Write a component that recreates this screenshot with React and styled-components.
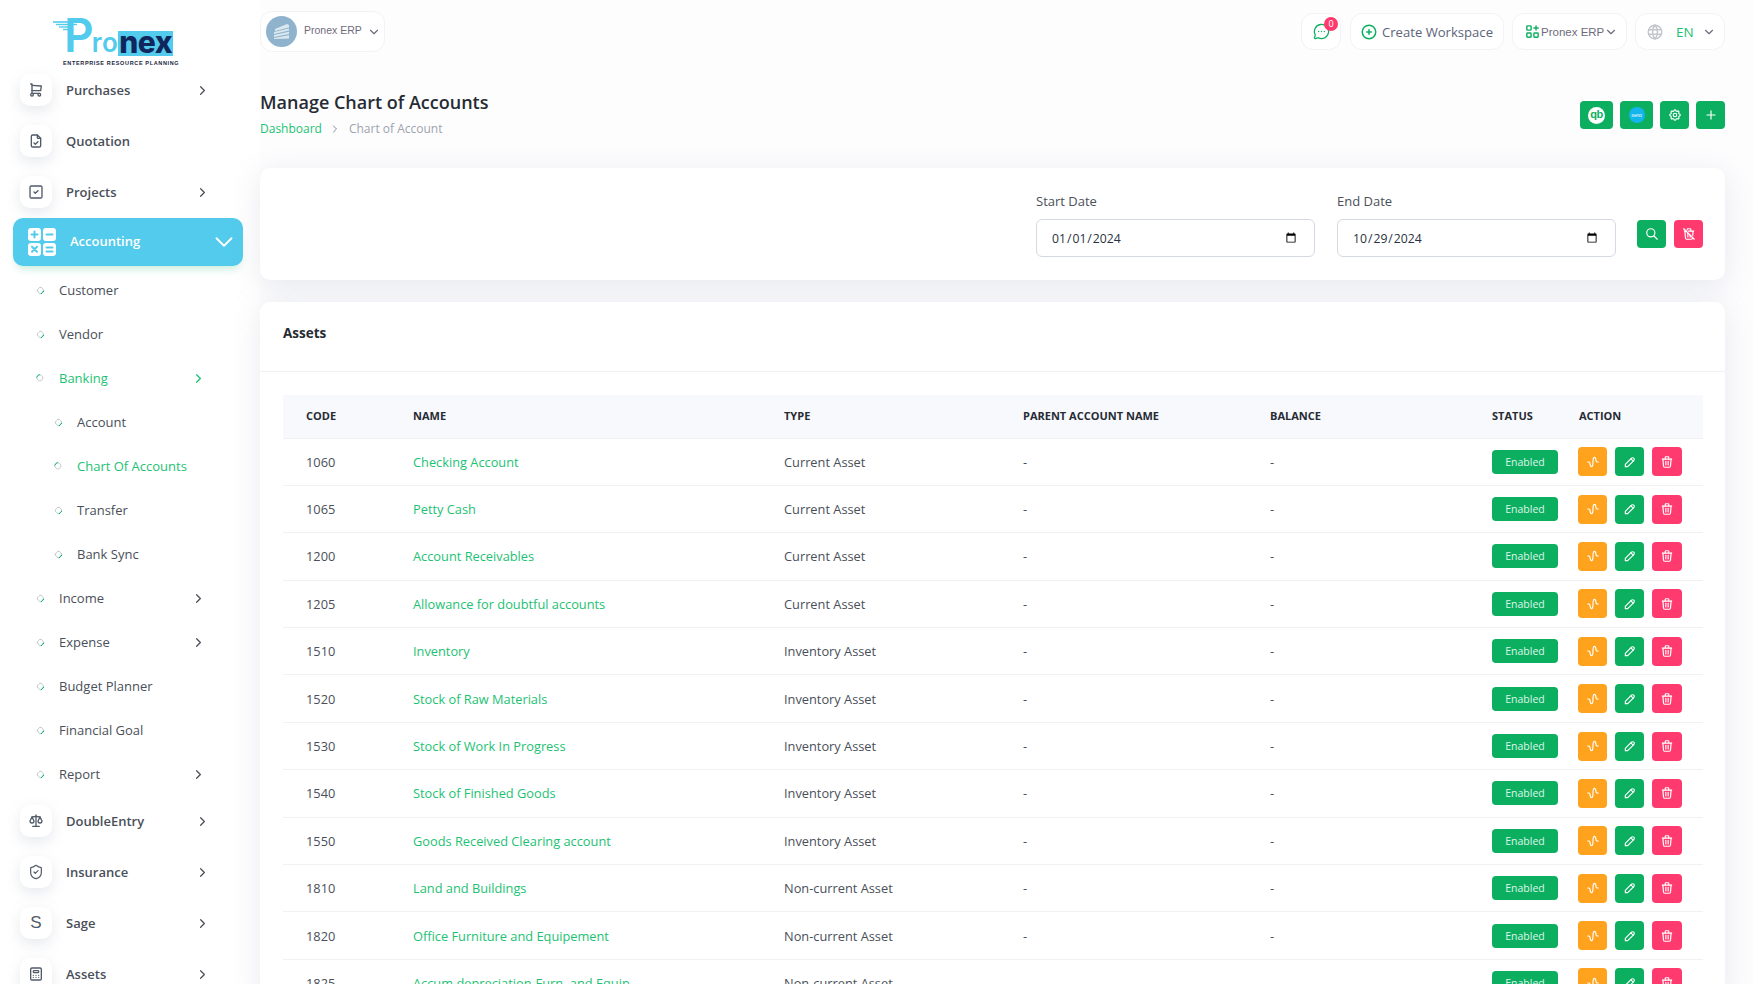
import React from "react";
import styled, { createGlobalStyle } from "styled-components";
import { MessageCircleMore, ShieldCheck } from "lucide-react";
import {
  TbShoppingCart, TbFileCheck, TbSquareCheck, TbScale, TbCalculator,
  TbChevronRight, TbChevronDown, TbPlus, TbSearch, TbTrashOff, TbWaveSine, TbPencil,
  TbTrash, TbApps, TbSettings, TbCirclePlus, TbWorld,
} from "react-icons/tb";

const GREEN = "#0caf60";
const LINK = "#1cc273";
const PINK = "#ff3a6e";
const ORANGE = "#ffa21d";
const CYAN = "#52cbec";
const FONT = `"Open Sans", "Liberation Sans", sans-serif`;

const Global = createGlobalStyle`
  html, body { margin: 0; padding: 0; height: 100%; overflow: hidden; background: #fdfdfe; }
  body { font-family: ${FONT}; font-size: 13px; color: #293240; }
  * { box-sizing: border-box; }
`;

const Shell = styled.div`
  display: flex;
  width: 1753px;
  height: 984px;
  overflow: hidden;
`;

const Sidebar = styled.aside`
  flex: 0 0 260px;
  height: 984px;
  overflow: hidden;
  background: #fff;
`;

const LogoArea = styled.div`
  height: 74px;
  padding: 21px 0 0 53px;
`;

const LogoMark = styled.div`
  position: relative;
  width: 130px;
  height: 46px;
`;

const LogoWord = styled.div`
  display: flex;
  align-items: flex-end;
  height: 35px;
  padding-left: 11px;
  color: ${CYAN};
  font-family: "Inter", sans-serif;
  line-height: 1;
`;

const LogoP = styled.span`
  font-size: 46px;
  font-weight: 600;
  margin-bottom: -2px;
`;

const LogoRo = styled.span`
  font-size: 26px;
  font-weight: 600;
  margin-left: -2px;
  margin-bottom: 0;
  letter-spacing: 0.5px;
`;

const LogoNex = styled.span`
  background: ${CYAN};
  color: #10275e;
  font-size: 30px;
  font-weight: 800;
  height: 25px;
  line-height: 22px;
  padding: 0 1px;
  margin-left: 0;
  letter-spacing: -0.5px;
`;

const LogoTag = styled.div`
  font-family: "Liberation Sans", sans-serif;
  font-size: 5.5px;
  font-weight: 700;
  letter-spacing: 0.65px;
  white-space: nowrap;
  color: #1a2540;
  margin: 4px 0 0 10px;
`;

const LogoWing = styled.svg`
  position: absolute;
  left: 0;
  top: 0;
`;

const TopItem = styled.div`
  display: flex;
  align-items: center;
  height: 32px;
  padding-left: 20px;
  width: 210px;
  margin-bottom: 19px;
  font-weight: 600;
  color: #4a4f59;
`;

const IconBox = styled.span`
  display: flex;
  align-items: center;
  justify-content: center;
  flex: 0 0 32px;
  height: 32px;
  margin-right: 14px;
  border-radius: 10px;
  background: #fff;
  color: #525b69;
  font-size: 16px;
  box-shadow: 0 5px 14px rgba(170, 176, 190, 0.28);
`;

const SageLetter = styled.span`
  font-family: "Liberation Sans", sans-serif;
  font-size: 17px;
  font-weight: 400;
  color: #525b69;
`;

const More = styled.span`
  display: flex;
  margin-left: auto;
  color: #4a4f59;
  font-size: 15px;
`;

const ActivePill = styled.div`
  display: flex;
  align-items: center;
  width: 230px;
  height: 48px;
  margin: -9px 0 2px 13px;
  padding: 0 4px 0 15px;
  border-radius: 10px;
  background: ${CYAN};
  color: #fff;
  font-weight: 600;
  box-shadow: 0 6px 10px -4px rgba(12, 175, 96, 0.28);
`;

const PillLabel = styled.span`
  margin-left: 14px;
  position: relative;
  top: -1px;
`;

const PillMore = styled.span`
  display: flex;
  margin-left: auto;
  font-size: 30px;
  & svg { stroke-width: 1.5; }
`;

const SubRow = styled.div`
  display: flex;
  align-items: center;
  width: 206px;
  height: 44px;
  padding-left: ${(p) => (p.$nested ? 55 : 37)}px;
  color: ${(p) => (p.$active ? LINK : "#4a4f59")};
  font-weight: 500;
  margin-bottom: ${(p) => (p.$last ? 9 : 0)}px;
`;

const Bullet = styled.span`
  flex: 0 0 7px;
  width: 7px;
  height: 7px;
  margin-right: 15px;
  border-radius: 50%;
  border: 1.6px solid #cbd0d9;
  border-bottom-color: ${GREEN};
  transform: rotate(${(p) => (p.$active ? 135 : -45)}deg) translateY(${(p) => (p.$active ? 1 : 0)}px);
`;

const SubMore = styled.span`
  display: flex;
  margin-left: auto;
  font-size: 15px;
  color: ${(p) => (p.$active ? LINK : "#4a4f59")};
`;

const Main = styled.main`
  position: relative;
  z-index: 1;
  flex: 1;
  min-width: 0;
  padding-right: 28px;
`;

const TopBar = styled.header`
  display: flex;
  justify-content: space-between;
  align-items: center;
  padding-top: 11px;
  height: 52px;
`;

const Chip = styled.div`
  display: flex;
  align-items: center;
  background: #fff;
  border: 1px solid #f3f3f6;
  border-radius: 12px;
  height: ${(p) => p.$h || 37}px;
`;

const CompanyChip = styled(Chip)`
  width: 125px;
  padding-left: 5px;
`;

const Avatar = styled.span`
  display: flex;
  align-items: center;
  justify-content: center;
  flex: 0 0 31px;
  height: 31px;
  border-radius: 50%;
  background: #8fb3cd;
`;

const ArialLabel = styled.span`
  font-family: "Liberation Sans", sans-serif;
  color: #6f6b7d;
  font-size: ${(p) => p.$size}px;
  white-space: nowrap;
`;

const CompanyLabel = styled(ArialLabel)`
  margin: -3px 0 0 7px;
`;

const ChipCaret = styled.span`
  display: flex;
  color: #6f6b7d;
  font-size: 14px;
  margin-left: ${(p) => p.$ml ?? 4}px;
`;

const RightGroup = styled.div`
  display: flex;
  gap: 8px;
`;

const ChatChip = styled(Chip)`
  position: relative;
  justify-content: center;
  width: 40px;
  margin-right: 1px;
  color: ${GREEN};
`;

const Badge = styled.span`
  position: absolute;
  top: 3px;
  right: 2px;
  width: 14px;
  height: 14px;
  border-radius: 50%;
  background: ${PINK};
  color: #fff;
  font-size: 9px;
  line-height: 14px;
  text-align: center;
`;

const WorkspaceChip = styled(Chip)`
  width: 154px;
  padding-left: 9px;
  gap: 4px;
  font-size: 13.1px;
  white-space: nowrap;
  color: #5c6378;
`;

const GreenGlyph = styled.span`
  display: flex;
  color: ${GREEN};
  font-size: ${(p) => p.$size}px;
`;

const ErpChip = styled(Chip)`
  width: 115px;
  padding-left: 11px;
`;

const LangChip = styled(Chip)`
  width: 90px;
  padding-left: 10px;
`;

const GlobeGlyph = styled.span`
  display: flex;
  color: #c4c6cc;
  font-size: 18px;
  margin-right: 12px;
`;

const LangText = styled.span`
  color: ${LINK};
  font-weight: 500;
  font-size: 13.5px;
`;

const PageHead = styled.div`
  display: flex;
  justify-content: space-between;
  padding-top: 38px;
  height: 116px;
`;

const Title = styled.h1`
  margin: 0;
  font-size: 18px;
  line-height: 25px;
  font-weight: 600;
  color: #262b33;
`;

const Crumbs = styled.div`
  display: flex;
  align-items: center;
  margin-top: 5px;
  font-size: 12px;
  line-height: 18px;
  color: #9ea3ad;
`;

const CrumbLink = styled.span`
  color: ${LINK};
`;

const CrumbSep = styled.span`
  display: flex;
  font-size: 12px;
  margin: 0 8px 0 7px;
  color: #8a8f99;
`;

const HeadActions = styled.div`
  display: flex;
  gap: 7px;
  padding-top: 11px;
`;

const SquareButton = styled.button`
  display: flex;
  align-items: center;
  justify-content: center;
  flex: 0 0 ${(p) => p.$w || 29}px;
  width: ${(p) => p.$w || 29}px;
  height: ${(p) => p.$h || 28}px;
  padding: 0;
  border: 0;
  border-radius: 4px;
  background: ${(p) => p.$bg || GREEN};
  color: #fff;
  font-size: ${(p) => p.$icon || 14}px;
`;

const QbLogo = styled.span`
  display: block;
  width: 17px;
  height: 17px;
  border-radius: 50%;
  background: #fff;
  color: ${GREEN};
  font: 700 11px/15px "Liberation Sans", sans-serif;
  letter-spacing: -0.5px;
  text-align: center;
`;

const XeroLogo = styled.span`
  display: block;
  width: 16px;
  height: 16px;
  border-radius: 50%;
  background: #13b5ea;
  color: #fff;
  font: 400 5.5px/16px "Liberation Sans", sans-serif;
  text-align: center;
`;

const Card = styled.section`
  background: #fff;
  border-radius: 10px;
  box-shadow: 0 6px 30px rgba(182, 186, 203, 0.3);
`;

const FilterCard = styled(Card)`
  display: flex;
  justify-content: flex-end;
  align-items: flex-start;
  height: 112px;
  padding: 24px 22px 0 0;
  margin-bottom: 22px;
`;

const Field = styled.label`
  display: block;
  width: 279px;
  margin-right: ${(p) => p.$gap}px;
`;

const FieldLabel = styled.span`
  display: block;
  font-size: 13px;
  line-height: 18px;
  margin-bottom: 9px;
  color: #4a4f59;
`;

const DateInput = styled.input`
  display: block;
  width: 100%;
  height: 38px;
  padding: 0 15px 0 14px;
  border: 1px solid #d5d9e2;
  border-radius: 6px;
  background: #fff;
  font-family: ${FONT};
  font-size: 12.2px;
  color: #293240;
  outline: none;
`;

const FilterButtons = styled.div`
  display: flex;
  gap: 8px;
  margin-top: 28px;
`;

const TableCard = styled(Card)`
  height: 700px;
  overflow: hidden;
`;

const CardHead = styled.div`
  height: 70px;
  padding: 22px 23px 0;
  border-bottom: 1px solid #f1f1f4;
  font-size: 13.5px;
  font-weight: 700;
  line-height: 19px;
  color: #262b33;
`;

const TableWrap = styled.div`
  padding: 23px 22px 0 23px;
`;

const Table = styled.table`
  width: 100%;
  table-layout: fixed;
  border-collapse: collapse;
`;

const Th = styled.th`
  width: ${(p) => p.$w}px;
  height: 43px;
  padding: 0 0 2px ${(p) => p.$pad ?? 23}px;
  background: #f8f9fd;
  border-bottom: 1px solid #f1f1f4;
  text-align: left;
  font-size: 11px;
  font-weight: 700;
  text-transform: uppercase;
  color: #262b33;
  white-space: nowrap;
`;

const Td = styled.td`
  height: 47.4px;
  padding: 0 0 0 ${(p) => p.$pad ?? 23}px;
  border-bottom: 1px solid #f1f1f4;
  font-size: 12.8px;
  color: #4a4f59;
  white-space: nowrap;
`;

const NameLink = styled.span`
  color: ${LINK};
`;

const Status = styled.span`
  display: block;
  width: 66px;
  height: 24px;
  border-radius: 4px;
  background: ${GREEN};
  color: #dff5ea;
  font-size: 10.5px;
  line-height: 24px;
  text-align: center;
`;

const Actions = styled.div`
  display: flex;
  gap: 8px;
`;

const Wing = () => (
  <LogoWing width="32" height="14" viewBox="0 0 32 14" fill="none" stroke={CYAN}>
    <path d="M0 1 H30" strokeWidth="1.6" />
    <path d="M3 3.5 H24" strokeWidth="1.4" />
    <path d="M6 6 H20" strokeWidth="1.4" />
    <path d="M10 8.5 H19" strokeWidth="1.4" />
  </LogoWing>
);

const BuildingIcon = () => (
  <svg width="18" height="18" viewBox="0 0 18 18" fill="#dbe7ef">
    <path d="M2 6 L14 1 L16 2 V4.4 L2 8 Z" />
    <path d="M1 9 L16 5.4 V7.6 L1 11 Z" />
    <path d="M1 12 L16 8.8 V11 L1 14 Z" />
    <path d="M1 15 L16 12.2 V15.6 L1 16 Z" />
  </svg>
);

const AccountingIcon = () => (
  <svg width="28" height="28" viewBox="0 0 28 28">
    <rect x="0" y="0" width="13" height="13" rx="3" fill="#fff" />
    <rect x="15" y="0" width="13" height="13" rx="3" fill="#fff" />
    <rect x="0" y="15" width="13" height="13" rx="3" fill="#fff" />
    <rect x="15" y="15" width="13" height="13" rx="3" fill="#fff" />
    <g stroke={CYAN} strokeWidth="2" strokeLinecap="round">
      <path d="M6.5 3.5 V9.5 M3.5 6.5 H9.5" />
      <path d="M18.5 6.5 H24.5" />
      <path d="M4 18.8 L9 23.8 M9 18.8 L4 23.8" />
      <path d="M18.5 19.5 H24.5 M18.5 23.5 H24.5" />
    </g>
  </svg>
);

const rows = [
  ["1060", "Checking Account", "Current Asset"],
  ["1065", "Petty Cash", "Current Asset"],
  ["1200", "Account Receivables", "Current Asset"],
  ["1205", "Allowance for doubtful accounts", "Current Asset"],
  ["1510", "Inventory", "Inventory Asset"],
  ["1520", "Stock of Raw Materials", "Inventory Asset"],
  ["1530", "Stock of Work In Progress", "Inventory Asset"],
  ["1540", "Stock of Finished Goods", "Inventory Asset"],
  ["1550", "Goods Received Clearing account", "Inventory Asset"],
  ["1810", "Land and Buildings", "Non-current Asset"],
  ["1820", "Office Furniture and Equipement", "Non-current Asset"],
  ["1825", "Accum.depreciation-Furn. and Equip", "Non-current Asset"],
];

const columns = [
  ["Code", 107], ["Name", 371], ["Type", 239], ["Parent Account Name", 247],
  ["Balance", 221], ["Status", 88, 24], ["Action", 147],
];

const Top = ({ icon, label, more }) => (
  <TopItem>
    <IconBox>{icon}</IconBox>
    {label}
    {more && <More><TbChevronRight /></More>}
  </TopItem>
);

const Sub = ({ label, more, active, nested, last }) => (
  <SubRow $active={active} $nested={nested} $last={last}>
    <Bullet $active={active} />
    {label}
    {more && <SubMore $active={active}><TbChevronRight /></SubMore>}
  </SubRow>
);

export default function App() {
  return (
    <Shell>
      <Global />
      <Sidebar>
        <LogoArea>
          <LogoMark>
            <Wing />
            <LogoWord>
              <LogoP>P</LogoP>
              <LogoRo>ro</LogoRo>
              <LogoNex>nex</LogoNex>
            </LogoWord>
            <LogoTag>ENTERPRISE RESOURCE PLANNING</LogoTag>
          </LogoMark>
        </LogoArea>
        <Top icon={<TbShoppingCart />} label="Purchases" more />
        <Top icon={<TbFileCheck />} label="Quotation" />
        <Top icon={<TbSquareCheck />} label="Projects" more />
        <ActivePill>
          <AccountingIcon />
          <PillLabel>Accounting</PillLabel>
          <PillMore><TbChevronDown /></PillMore>
        </ActivePill>
        <Sub label="Customer" />
        <Sub label="Vendor" />
        <Sub label="Banking" more active />
        <Sub label="Account" nested />
        <Sub label="Chart Of Accounts" nested active />
        <Sub label="Transfer" nested />
        <Sub label="Bank Sync" nested />
        <Sub label="Income" more />
        <Sub label="Expense" more />
        <Sub label="Budget Planner" />
        <Sub label="Financial Goal" />
        <Sub label="Report" more last />
        <Top icon={<TbScale />} label="DoubleEntry" more />
        <Top icon={<ShieldCheck size={16} strokeWidth={1.8} />} label="Insurance" more />
        <Top icon={<SageLetter>S</SageLetter>} label="Sage" more />
        <Top icon={<TbCalculator />} label="Assets" more />
      </Sidebar>
      <Main>
        <TopBar>
          <CompanyChip $h={41}>
            <Avatar><BuildingIcon /></Avatar>
            <CompanyLabel $size={10.5}>Pronex ERP</CompanyLabel>
            <ChipCaret $ml={5}><TbChevronDown /></ChipCaret>
          </CompanyChip>
          <RightGroup>
            <ChatChip>
              <MessageCircleMore size={17} strokeWidth={1.8} />
              <Badge>0</Badge>
            </ChatChip>
            <WorkspaceChip>
              <GreenGlyph $size={18}><TbCirclePlus /></GreenGlyph>
              Create Workspace
            </WorkspaceChip>
            <ErpChip>
              <GreenGlyph $size={17}><TbApps /></GreenGlyph>
              <ArialLabel $size={11.5}>Pronex ERP</ArialLabel>
              <ChipCaret $ml={0}><TbChevronDown /></ChipCaret>
            </ErpChip>
            <LangChip>
              <GlobeGlyph><TbWorld /></GlobeGlyph>
              <LangText>EN</LangText>
              <ChipCaret $ml={8}><TbChevronDown /></ChipCaret>
            </LangChip>
          </RightGroup>
        </TopBar>
        <PageHead>
          <div>
            <Title>Manage Chart of Accounts</Title>
            <Crumbs>
              <CrumbLink>Dashboard</CrumbLink>
              <CrumbSep><TbChevronRight /></CrumbSep>
              Chart of Account
            </Crumbs>
          </div>
          <HeadActions>
            <SquareButton $w={33}><QbLogo>qb</QbLogo></SquareButton>
            <SquareButton $w={33}><XeroLogo>xero</XeroLogo></SquareButton>
            <SquareButton><TbSettings /></SquareButton>
            <SquareButton><TbPlus /></SquareButton>
          </HeadActions>
        </PageHead>
        <FilterCard>
          <Field $gap={22}>
            <FieldLabel>Start Date</FieldLabel>
            <DateInput type="date" defaultValue="2024-01-01" />
          </Field>
          <Field $gap={21}>
            <FieldLabel>End Date</FieldLabel>
            <DateInput type="date" defaultValue="2024-10-29" />
          </Field>
          <FilterButtons>
            <SquareButton><TbSearch /></SquareButton>
            <SquareButton $bg={PINK}><TbTrashOff /></SquareButton>
          </FilterButtons>
        </FilterCard>
        <TableCard>
          <CardHead>Assets</CardHead>
          <TableWrap>
            <Table>
              <thead>
                <tr>
                  {columns.map(([label, w, pad]) => (
                    <Th key={label} $w={w} $pad={pad}>{label}</Th>
                  ))}
                </tr>
              </thead>
              <tbody>
                {rows.map(([code, name, type]) => (
                  <tr key={code}>
                    <Td>{code}</Td>
                    <Td><NameLink>{name}</NameLink></Td>
                    <Td>{type}</Td>
                    <Td>-</Td>
                    <Td>-</Td>
                    <Td $pad={24}><Status>Enabled</Status></Td>
                    <Td $pad={22}>
                      <Actions>
                        <SquareButton $bg={ORANGE} $h={29} $icon={14}><TbWaveSine /></SquareButton>
                        <SquareButton $h={29} $icon={14}><TbPencil /></SquareButton>
                        <SquareButton $bg={PINK} $w={30} $h={29} $icon={14}><TbTrash /></SquareButton>
                      </Actions>
                    </Td>
                  </tr>
                ))}
              </tbody>
            </Table>
          </TableWrap>
        </TableCard>
      </Main>
    </Shell>
  );
}
